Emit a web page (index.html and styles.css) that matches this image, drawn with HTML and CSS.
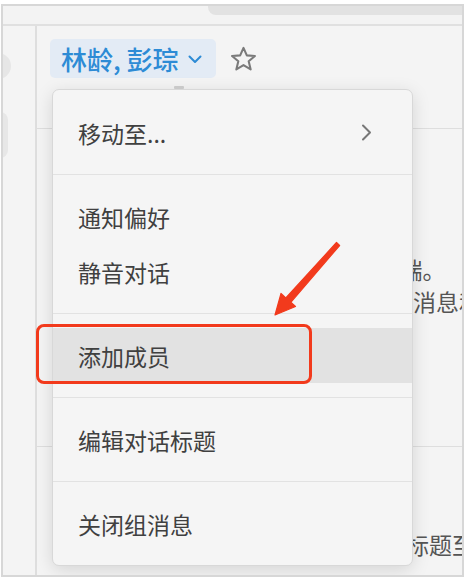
FILE: index.html
```html
<!DOCTYPE html>
<html lang="zh-CN">
<head>
<meta charset="utf-8">
<link rel="stylesheet" href="styles.css">
</head>
<body>
<div class="frame">
  <div class="topbar"><div class="tab"></div></div>
  <div class="body">
    <aside class="sidebar">
      <div class="avatar"></div>
      <div class="nav-pill"></div>
    </aside>
    <main class="main">
      <header class="header">
        <div class="title-pill">
          <span class="title">林龄, 彭琮</span>
          <svg class="chev-down" width="14" height="9" viewBox="0 0 14 9"><path d="M1.5 1.5 L7 7 L12.5 1.5" fill="none" stroke="#2d8bd5" stroke-width="2" stroke-linecap="round" stroke-linejoin="round"/></svg>
        </div>
        <svg class="star" width="27" height="26" viewBox="0 0 26 25"><path d="M13 1.8 L16.2 9 L24 9.6 L18 14.7 L19.9 22.5 L13 18.3 L6.1 22.5 L8 14.7 L2 9.6 L9.8 9 Z" fill="none" stroke="#7a7a7a" stroke-width="2" stroke-linejoin="round"/></svg>
      </header>
      <section class="msgs">
        <div class="line l1">端。</div>
        <div class="line l2">消息和文件</div>
      </section>
      <section class="msgs2">
        <div class="line l3">标题至任意</div>
      </section>
    </main>
  </div>
  <div class="menu">
    <div class="group">
      <div class="item"><span>移动至...</span>
        <svg class="chev-right" width="11" height="17" viewBox="0 0 11 17"><path d="M2 1.5 L9 8.5 L2 15.5" fill="none" stroke="#777" stroke-width="2" stroke-linecap="round" stroke-linejoin="round"/></svg>
      </div>
    </div>
    <div class="group">
      <div class="item">通知偏好</div>
      <div class="item">静音对话</div>
    </div>
    <div class="group">
      <div class="item active">添加成员</div>
    </div>
    <div class="group">
      <div class="item">编辑对话标题</div>
    </div>
    <div class="group">
      <div class="item">关闭组消息</div>
    </div>
  </div>
</div>
<div class="annot-box"></div>
<svg class="annot-arrow" width="470" height="584" viewBox="0 0 470 584">
  <polygon points="336.5,242.5 285.8,298 281,293.5 275,315 295.5,306.5 290.8,302.3 339.6,245.5" fill="#f23a1c" stroke="#f23a1c" stroke-width="1.2" stroke-linejoin="round"/>
</svg>
</body>
</html>
```
FILE: styles.css
```css
* { box-sizing: border-box; }
html, body { margin: 0; padding: 0; }
body {
  background: #ffffff;
  width: 470px;
  height: 584px;
  position: relative;
  overflow: hidden;
  font-family: "Noto Sans CJK SC", "Noto Sans", sans-serif;
}
.frame {
  position: relative;
  margin: 4px 0 0 1px;
  width: 463px;
  height: 573px;
  border: 2px solid #d7d7d7;
  background: #f4f4f4;
  overflow: hidden;
  display: flex;
  flex-direction: column;
}
.topbar {
  height: 20px;
  background: #f3f3f3;
  border-bottom: 2px solid #e0e0e0;
  display: flex;
  flex: none;
}
.tab {
  margin-left: 205px;
  flex: 1;
  height: 9px;
  background: #e2e2e2;
  border-bottom-left-radius: 8px;
}
.body {
  flex: 1;
  display: flex;
}
.sidebar {
  width: 34px;
  flex: none;
  border-right: 2px solid #dedede;
  background: #f4f4f4;
  display: flex;
  flex-direction: column;
  overflow: hidden;
}
.avatar {
  margin-top: 27px;
  margin-left: -18px;
  width: 26px;
  height: 26px;
  border-radius: 50%;
  background: #e6e6e6;
}
.nav-pill {
  margin-top: 33px;
  margin-left: -19px;
  width: 24px;
  height: 46px;
  border-radius: 8px;
  background: #e7e7e7;
}
.main {
  flex: 1;
  display: flex;
  flex-direction: column;
  min-width: 0;
  overflow: hidden;
}
.header {
  height: 103px;
  flex: none;
  border-bottom: 1px solid #dedede;
  display: flex;
  align-items: flex-start;
  padding: 13px 0 0 13px;
}
.title-pill {
  height: 39px;
  background: #e3ebf5;
  border-radius: 5px;
  display: flex;
  align-items: center;
  padding: 0 14px 0 11px;
}
.title {
  font-size: 26px;
  font-weight: 500;
  color: #2d8bd5;
  line-height: 1;
  white-space: nowrap;
}
.chev-down { margin-left: 9px; margin-top: 2px; }
.star { margin-left: 14px; margin-top: 7px; }
.msgs {
  height: 318px;
  flex: none;
  border-bottom: 1px solid #dedede;
  padding-top: 124px;
}
.line {
  font-size: 23px;
  line-height: 32px;
  color: #555;
  white-space: nowrap;
}
.l1 { padding-left: 362.5px; }
.l2 { padding-left: 376px; }
.msgs2 { padding-top: 81px; }
.l3 { padding-left: 369px; }

.menu {
  position: absolute;
  left: 49px;
  top: 83px;
  width: 361px;
  background: #f5f5f5;
  border: 1px solid #d8d8d8;
  border-radius: 7px;
  box-shadow: 0 4px 18px rgba(0,0,0,0.13);
}
.menu::before {
  content: "";
  position: absolute;
  left: 121px;
  top: -4px;
  width: 10px;
  height: 3px;
  border-radius: 1px;
  background: #c9c9c9;
}
.group {
  padding: 14px 0;
  border-top: 1px solid #e2e2e2;
}
.group:first-child { border-top: none; padding-top: 15px; }
.item {
  height: 55px;
  display: flex;
  align-items: center;
  justify-content: space-between;
  padding: 0 40px 0 25px;
  font-size: 23px;
  color: #404040;
  white-space: nowrap;
}
.item.active { background: #e2e2e2; }
.annot-box {
  position: absolute;
  left: 36px;
  top: 324px;
  width: 276px;
  height: 60px;
  border: 3px solid #f23a1c;
  border-radius: 8px;
}
.annot-arrow {
  position: absolute;
  left: 0;
  top: 0;
  pointer-events: none;
}
```
